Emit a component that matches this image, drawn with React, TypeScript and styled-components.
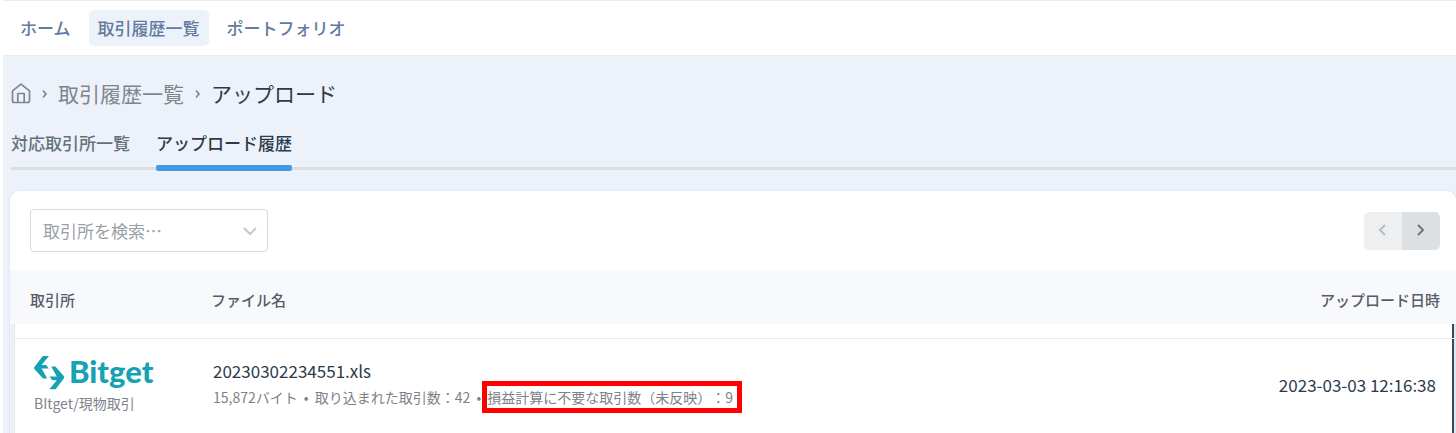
import React from "react";
import styled, { createGlobalStyle } from "styled-components";

const Global = createGlobalStyle`
  * { box-sizing: border-box; }
  body {
    margin: 0;
    background: #fff;
    color: #2b3b4c;
    font-family: "Noto Sans CJK JP", "Noto Sans", sans-serif;
    text-spacing-trim: space-all;
  }
`;

const Shell = styled.div`
  min-height: 100vh;
  margin-left: 3px;
  background: #edf2fa;
  display: flex;
  flex-direction: column;
  overflow-x: hidden;
`;

const TopNav = styled.nav`
  display: flex;
  align-items: center;
  gap: 9px;
  height: 56px;
  padding: 0 8px;
  background: #fff;
  border-top: 1px solid #ececee;
  border-bottom: 1px solid #e9edf1;
`;

const NavLink = styled.a<{ $active?: boolean }>`
  height: 36px;
  padding: 0 9px;
  border-radius: 5px;
  font-size: 17px;
  line-height: 35px;
  font-weight: 500;
  color: #627b9e;
  text-decoration: none;
  background: ${(p) => (p.$active ? "#edf2fa" : "transparent")};
`;

const Main = styled.main`
  flex: 1;
  display: flex;
  flex-direction: column;
  padding-left: 7px;
`;

const Crumbs = styled.nav`
  display: flex;
  align-items: center;
  gap: 10px;
  padding: 21px 0 0 1px;
  font-size: 21px;
  line-height: 32px;
`;

const CrumbLink = styled.a`
  display: flex;
  color: #7c868c;
  text-decoration: none;
`;

const CrumbCurrent = styled.span`
  color: #2b3b4c;
`;

const Tabs = styled.div`
  display: flex;
  gap: 26px;
  margin: 18px 0 0 1px;
  box-shadow: inset 0 -1px #edf2fa, inset 0 -4px #dcdfe2;
`;

const Tab = styled.button<{ $active?: boolean }>`
  height: 44px;
  padding: 0 0 12px;
  border: 0;
  background: none;
  font: 500 17px/32px "Noto Sans CJK JP", sans-serif;
  color: ${(p) => (p.$active ? "#2b3b4c" : "#65717a")};
  position: relative;
  &::after {
    content: "";
    display: ${(p) => (p.$active ? "block" : "none")};
    position: absolute;
    left: 0;
    right: 0;
    bottom: 0;
    height: 6px;
    border-radius: 2px;
    background: #4299e1;
  }
`;

const Card = styled.section`
  flex: 1;
  margin-top: 20px;
  background: #fff;
  border-radius: 9px 9px 0 0;
  box-shadow: 0 0 2px #cdd5dd;
`;

const Toolbar = styled.div`
  display: flex;
  justify-content: space-between;
  align-items: center;
  height: 79px;
  padding: 0 16px 0 20px;
`;

const Picker = styled.label`
  display: flex;
  align-items: center;
  width: 238px;
  height: 43px;
  padding: 0 8px 0 12px;
  border: 1px solid #d6dadd;
  border-radius: 4px;
  color: #c5c8cb;
`;

const PickerInput = styled.input`
  flex: 1;
  min-width: 0;
  padding: 0;
  border: 0;
  outline: 0;
  background: none;
  color: #2b3b4c;
  font: 400 17px/24px "Noto Sans CJK JP", sans-serif;
  &::placeholder { color: #9a9fa5; opacity: 1; }
`;

const Pager = styled.div`
  display: flex;
  border-radius: 5px;
  overflow: hidden;
`;

const PageButton = styled.button`
  display: grid;
  place-items: center;
  width: 38px;
  height: 38px;
  padding: 0 2px 2px 0;
  border: 0;
  color: #6f777d;
  background: #dce0e3;
  &:disabled { color: #b9bcbf; background: #edeff1; }
`;

const Table = styled.table`
  width: 100%;
  border-collapse: separate;
  border-spacing: 0;
  table-layout: fixed;
`;

const Head = styled.th<{ $end?: boolean }>`
  height: 54px;
  padding: ${(p) => (p.$end ? "6px 16px 0 0" : "6px 0 0 20px")};
  background: #f7f9fd;
  font-size: 15px;
  line-height: 24px;
  font-weight: 500;
  color: #575c66;
  text-align: ${(p) => (p.$end ? "right" : "left")};
`;

const Spacer = styled.td`
  height: 15px;
  padding: 0;
  border-bottom: 1px solid #e8e9ec;
`;

const Cell = styled.td`
  height: 95px;
  padding: 14px 0 0 22px;
  vertical-align: top;
`;

const Body = styled.tbody`
  td:first-child {
    padding-left: 20px;
    border-left: 4px solid #edf2fa;
    box-shadow: inset 1px 0 #e3e7ed;
  }
  td:last-child {
    border-right: 2px solid #dfe9f0;
    box-shadow: inset -2px 0 #34495a;
  }
`;

const DateCell = styled(Cell)`
  padding: 33px 18px 0 0;
  font-size: 17px;
  line-height: 26px;
  text-align: right;
`;

const Brand = styled.div`
  display: flex;
  align-items: flex-end;
  gap: 4px;
  height: 37px;
  color: #17a2b4;
  font: 900 31px/37px Lato, sans-serif;
`;

const FileName = styled.div`
  padding-top: 5px;
  font-size: 17px;
  line-height: 26px;
`;

const Meta = styled.div`
  font-size: 14px;
  line-height: 26px;
  color: #7d828b;
  white-space: nowrap;
`;

const Dot = styled.span`
  display: inline-block;
  width: 17px;
  text-align: center;
`;

const Marked = styled.span`
  position: relative;
  &::after {
    content: "";
    position: absolute;
    inset: -6px -9px -6px -5px;
    border: 5px solid #fe0000;
  }
`;

const HomeIcon = () => (
  <svg width="20" height="22" viewBox="0 0 20 22" fill="none" stroke="currentColor" strokeWidth="1.7" strokeLinejoin="round" aria-hidden="true">
    <path d="M1.500 8.800 10 2.200l8.500 6.600V18.500a2 2 0 0 1-2 2h-13a2 2 0 0 1-2-2z" />
    <path d="M6.800 20.500v-9h6.400v9" />
  </svg>
);

const Separator = () => (
  <svg width="7" height="10" viewBox="0 0 7 10" fill="none" stroke="#7c868c" strokeWidth="1.6" aria-hidden="true">
    <path d="m2 2.500 3 3.500-3 3.500" />
  </svg>
);

const Chevron = ({ d, size = 18 }: { d: string; size?: number }) => (
  <svg width={size} height={size} viewBox="0 0 18 18" fill="none" stroke="currentColor" strokeWidth="2" aria-hidden="true">
    <path d={d} />
  </svg>
);

const markArm = "M8.800 0H15L7.600 9H12.200L14.800 12.600H7.600L13.200 22.600H9L.6 13.200Q-.3 12 .6 10.800Z";

const BitgetMark = () => (
  <svg width="31" height="34" viewBox="0 0 31 34" fill="currentColor" aria-hidden="true">
    <path d={markArm} />
    <path d={markArm} transform="rotate(180 15.200 16.600)" />
  </svg>
);

export default function App() {
  return (
    <>
      <Global />
      <Shell>
        <TopNav>
          <NavLink href="#home">ホーム</NavLink>
          <NavLink href="#trades" $active>取引履歴一覧</NavLink>
          <NavLink href="#portfolio">ポートフォリオ</NavLink>
        </TopNav>
        <Main>
          <Crumbs>
            <CrumbLink href="#home" aria-label="ホーム"><HomeIcon /></CrumbLink>
            <Separator />
            <CrumbLink href="#trades">取引履歴一覧</CrumbLink>
            <Separator />
            <CrumbCurrent>アップロード</CrumbCurrent>
          </Crumbs>
          <Tabs role="tablist">
            <Tab role="tab" aria-selected={false}>対応取引所一覧</Tab>
            <Tab role="tab" aria-selected $active>アップロード履歴</Tab>
          </Tabs>
          <Card>
            <Toolbar>
              <Picker>
                <PickerInput aria-label="取引所を検索" placeholder="取引所を検索…" />
                <Chevron d="m3 6 6 6 6-6" />
              </Picker>
              <Pager>
                <PageButton disabled aria-label="前へ"><Chevron d="m12 4-5 5 5 5" /></PageButton>
                <PageButton aria-label="次へ"><Chevron d="m7 4 5 5-5 5" /></PageButton>
              </Pager>
            </Toolbar>
            <Table>
              <colgroup>
                <col style={{ width: 181 }} />
                <col />
                <col style={{ width: 200 }} />
              </colgroup>
              <thead>
                <tr>
                  <Head>取引所</Head>
                  <Head>ファイル名</Head>
                  <Head $end>アップロード日時</Head>
                </tr>
              </thead>
              <Body>
                <tr>
                  <Spacer />
                  <Spacer />
                  <Spacer />
                </tr>
                <tr>
                  <Cell>
                    <Brand><BitgetMark />Bitget</Brand>
                    <Meta>BItget/現物取引</Meta>
                  </Cell>
                  <Cell>
                    <FileName>20230302234551.xls</FileName>
                    <Meta>
                      15,872バイト<Dot>•</Dot>取り込まれた取引数：42<Dot>•</Dot>
                      <Marked>損益計算に不要な取引数（未反映）：9</Marked>
                    </Meta>
                  </Cell>
                  <DateCell>2023-03-03 12:16:38</DateCell>
                </tr>
              </Body>
            </Table>
          </Card>
        </Main>
      </Shell>
    </>
  );
}
